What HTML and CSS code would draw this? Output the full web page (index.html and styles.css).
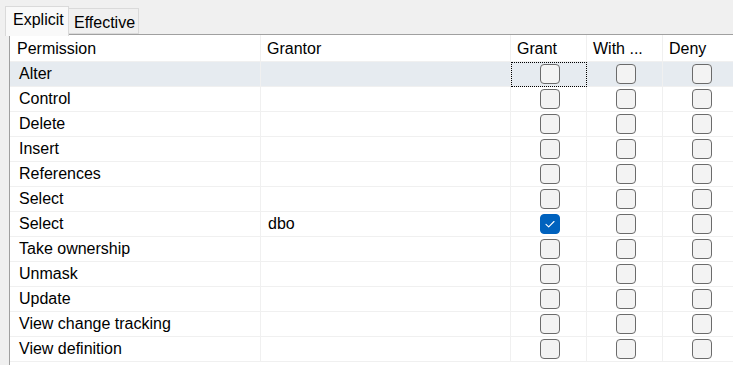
FILE: index.html
```html
<!DOCTYPE html>
<html>
<head>
<meta charset="utf-8">
<link rel="stylesheet" href="styles.css">
</head>
<body>
<div class="tabs">
  <div class="tab active">Explicit</div>
  <div class="tab">Effective</div>
</div>
<div class="panel">
  <div class="grid">
    <div class="cell hd c1">Permission</div>
    <div class="cell hd">Grantor</div>
    <div class="cell hd">Grant</div>
    <div class="cell hd">With ...</div>
    <div class="cell hd">Deny</div>

    <div class="cell c1 sel">Alter</div><div class="cell sel"></div><div class="cell sel chk focus"><span class="box"></span></div><div class="cell sel chk"><span class="box"></span></div><div class="cell sel chk"><span class="box"></span></div>
    <div class="cell c1">Control</div><div class="cell"></div><div class="cell chk"><span class="box"></span></div><div class="cell chk"><span class="box"></span></div><div class="cell chk"><span class="box"></span></div>
    <div class="cell c1">Delete</div><div class="cell"></div><div class="cell chk"><span class="box"></span></div><div class="cell chk"><span class="box"></span></div><div class="cell chk"><span class="box"></span></div>
    <div class="cell c1">Insert</div><div class="cell"></div><div class="cell chk"><span class="box"></span></div><div class="cell chk"><span class="box"></span></div><div class="cell chk"><span class="box"></span></div>
    <div class="cell c1">References</div><div class="cell"></div><div class="cell chk"><span class="box"></span></div><div class="cell chk"><span class="box"></span></div><div class="cell chk"><span class="box"></span></div>
    <div class="cell c1">Select</div><div class="cell"></div><div class="cell chk"><span class="box"></span></div><div class="cell chk"><span class="box"></span></div><div class="cell chk"><span class="box"></span></div>
    <div class="cell c1">Select</div><div class="cell c2">dbo</div><div class="cell chk"><span class="box checked"><svg viewBox="0 0 20 20" width="20" height="20"><path d="M6 10.3 L8.7 12.8 L14 7.5" fill="none" stroke="#fff" stroke-width="1.1" stroke-linecap="round" stroke-linejoin="round"/></svg></span></div><div class="cell chk"><span class="box"></span></div><div class="cell chk"><span class="box"></span></div>
    <div class="cell c1">Take ownership</div><div class="cell"></div><div class="cell chk"><span class="box"></span></div><div class="cell chk"><span class="box"></span></div><div class="cell chk"><span class="box"></span></div>
    <div class="cell c1">Unmask</div><div class="cell"></div><div class="cell chk"><span class="box"></span></div><div class="cell chk"><span class="box"></span></div><div class="cell chk"><span class="box"></span></div>
    <div class="cell c1">Update</div><div class="cell"></div><div class="cell chk"><span class="box"></span></div><div class="cell chk"><span class="box"></span></div><div class="cell chk"><span class="box"></span></div>
    <div class="cell c1">View change tracking</div><div class="cell"></div><div class="cell chk"><span class="box"></span></div><div class="cell chk"><span class="box"></span></div><div class="cell chk"><span class="box"></span></div>
    <div class="cell c1">View definition</div><div class="cell"></div><div class="cell chk"><span class="box"></span></div><div class="cell chk"><span class="box"></span></div><div class="cell chk"><span class="box"></span></div>
  </div>
</div>
</body>
</html>
```
FILE: styles.css
```css
html, body {
  margin: 0;
  padding: 0;
  background: #f0f0f0;
  font-family: "Liberation Sans", Arial, sans-serif;
  font-size: 16px;
  color: #000;
  overflow: hidden;
}
.tabs {
  display: flex;
  align-items: flex-start;
  padding: 6px 0 0 5px;
  height: 28px;
  position: relative;
  z-index: 1;
}
.tab {
  box-sizing: border-box;
  height: 26px;
  margin-top: 2px;
  padding: 5px 0 0 5px;
  width: 70px;
  border: 1px solid #dadada;
  border-left: none;
  background: #f0f0f0;
  line-height: 18px;
}
.tab.active {
  margin-top: 0;
  height: 30px;
  width: 64px;
  padding: 4px 0 0 7px;
  border-left: 1px solid #dadada;
  border-bottom: none;
  background: #f9f9f9;
}
.panel {
  margin-left: 9px;
  background: #fff;
  border-top: 1px solid #a0a0a0;
  border-left: 1px solid #a0a0a0;
  height: 340px;
  overflow: hidden;
}
.grid {
  display: grid;
  width: 729px;
  grid-template-columns: 251px 250px 76px 76px 76px;
  grid-auto-rows: 25px;
  grid-template-rows: 27px;
}
.cell {
  box-sizing: border-box;
  border-right: 1px solid #f0f0f0;
  border-bottom: 1px solid #f0f0f0;
  padding-left: 7px;
  display: flex;
  align-items: center;
  white-space: nowrap;
  overflow: hidden;
  line-height: 18px;
}
.cell.hd { padding-left: 6px; padding-top: 1px; }
.cell.hd.c1 { padding-left: 7px; }
.cell.c1 { padding-left: 9px; }
.cell.c2 { padding-left: 7px; }
.cell.sel { background: #e6ebf0; }
.cell.chk {
  justify-content: center;
  padding-left: 0;
}
.cell.focus {
  outline: 1px dotted #000;
  outline-offset: -1px;
}
.box {
  box-sizing: border-box;
  width: 20px;
  height: 20px;
  border: 1px solid #6b6b6b;
  border-radius: 4px;
  background: #f3f3f3;
  display: block;
  margin-left: 2px;
}
.box.checked {
  background: #0062be;
  border-color: #0062be;
  position: relative;
}
.box.checked svg {
  position: absolute;
  left: -1px;
  top: -1px;
}
```
